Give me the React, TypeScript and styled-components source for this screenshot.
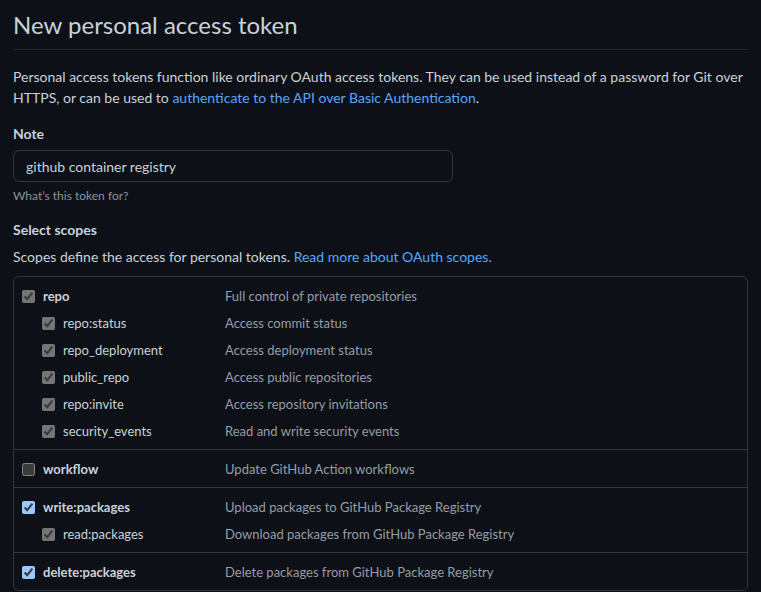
import styled, { createGlobalStyle } from "styled-components"

type Scope = {
    name: string
    description: string
    checked: boolean
    disabled?: boolean
}

type Group = {
    parent: Scope
    children: Scope[]
}

const groups: Group[] = [
    {
        parent: { name: "repo", description: "Full control of private repositories", checked: true, disabled: true },
        children: [
            { name: "repo:status", description: "Access commit status", checked: true, disabled: true },
            { name: "repo_deployment", description: "Access deployment status", checked: true, disabled: true },
            { name: "public_repo", description: "Access public repositories", checked: true, disabled: true },
            { name: "repo:invite", description: "Access repository invitations", checked: true, disabled: true },
            { name: "security_events", description: "Read and write security events", checked: true, disabled: true },
        ],
    },
    {
        parent: { name: "workflow", description: "Update GitHub Action workflows", checked: false },
        children: [],
    },
    {
        parent: { name: "write:packages", description: "Upload packages to GitHub Package Registry", checked: true },
        children: [
            { name: "read:packages", description: "Download packages from GitHub Package Registry", checked: true, disabled: true },
        ],
    },
    {
        parent: { name: "delete:packages", description: "Delete packages from GitHub Package Registry", checked: true },
        children: [],
    },
]

const GlobalStyle = createGlobalStyle`
  html, body {
    margin: 0;
    background: #0d1117;
    color-scheme: dark;
  }
  body {
    font-family: Lato, "Liberation Sans", sans-serif;
    font-size: 14px;
    line-height: 1.5;
    color: #c9d1d9;
  }
`

const Page = styled.div`
  padding: 7px 13px 0;
  height: 585px;
  overflow: hidden;
`

const Title = styled.h2`
  margin: 0;
  padding-bottom: 6px;
  border-bottom: 1px solid #21262d;
  font-size: 24px;
  font-weight: 400;
  line-height: 36px;
  color: #c9d1d9;
`

const Intro = styled.p`
  margin: 16px 0 15px;
  line-height: 21px;
`

const Link = styled.a`
  color: #58a6ff;
  text-decoration: none;
`

const Label = styled.div`
  font-weight: 700;
  line-height: 21px;
`

const NoteInput = styled.input`
  display: block;
  box-sizing: border-box;
  width: 440px;
  height: 32px;
  margin-top: 6px;
  padding: 5px 12px;
  background: #0d1117;
  border: 1px solid #30363d;
  border-radius: 6px;
  color: #c9d1d9;
  font: inherit;
  outline: none;
`

const Hint = styled.div`
  margin: 5px 0 14px;
  font-size: 12px;
  line-height: 18px;
  color: #8b949e;
`

const ScopesNote = styled.p`
  margin: 6px 0 9px;
  line-height: 21px;
`

const ScopeBox = styled.div`
  border: 1px solid #30363d;
  border-radius: 6px;
  font-size: 13px;
`

const Section = styled.div`
  padding: 6px 0 4px;
  & + & {
    border-top: 1px solid #30363d;
  }
`

const Row = styled.label`
  display: grid;
  grid-template-columns: 203px 1fr;
  align-items: center;
  height: 27px;
  padding-left: 8px;
`

const ScopeName = styled.span<{ $nested?: boolean }>`
  display: flex;
  align-items: center;
  gap: 8px;
  padding-left: ${({ $nested }) => ($nested ? "20px" : "0")};
  font-weight: ${({ $nested }) => ($nested ? 400 : 700)};
  color: #c9d1d9;
`

const Check = styled.input`
  width: 13px;
  height: 13px;
  margin: 0;
`

const Description = styled.span`
  color: #959da5;
`

function ScopeRow({ scope, nested }: { scope: Scope; nested?: boolean }) {
    return (
        <Row>
            <ScopeName $nested={nested}>
                <Check type="checkbox" defaultChecked={scope.checked} disabled={scope.disabled} />
                {scope.name}
            </ScopeName>
            <Description>{scope.description}</Description>
        </Row>
    )
}

export default function App() {
    return (
        <Page>
            <GlobalStyle />
            <Title>New personal access token</Title>

            <Intro>
                Personal access tokens function like ordinary OAuth access tokens. They can be used instead of a
                password for Git over HTTPS, or can be used to{" "}
                <Link href="#">authenticate to the API over Basic Authentication</Link>.
            </Intro>

            <Label>Note</Label>
            <NoteInput defaultValue="github container registry" />
            <Hint>What’s this token for?</Hint>

            <Label>Select scopes</Label>
            <ScopesNote>
                Scopes define the access for personal tokens. <Link href="#">Read more about OAuth scopes.</Link>
            </ScopesNote>

            <ScopeBox>
                {groups.map((group) => (
                    <Section key={group.parent.name}>
                        <ScopeRow scope={group.parent} />
                        {group.children.map((child) => (
                            <ScopeRow key={child.name} scope={child} nested />
                        ))}
                    </Section>
                ))}
            </ScopeBox>
        </Page>
    )
}
